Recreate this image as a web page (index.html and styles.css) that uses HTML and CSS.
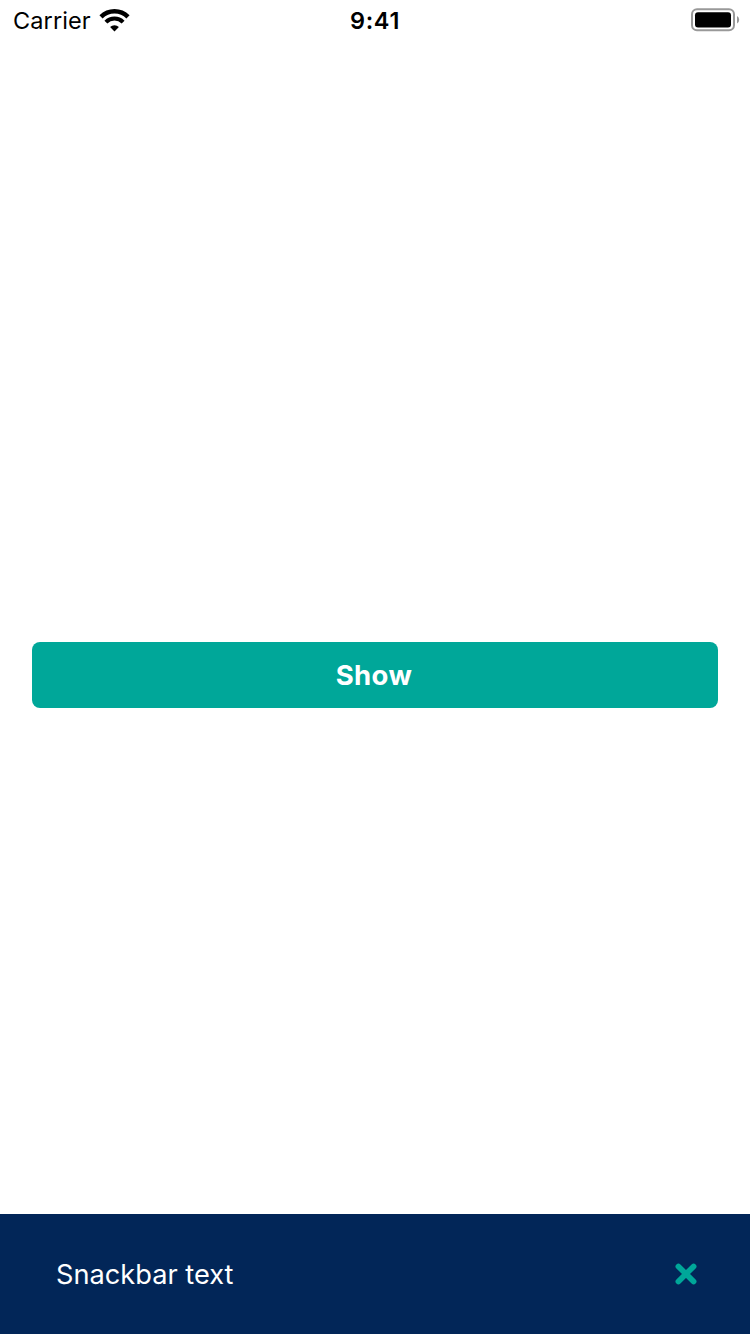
FILE: index.html
```html
<!DOCTYPE html>
<html lang="en">
<head>
<meta charset="utf-8">
<title>Snackbar</title>
<link rel="stylesheet" href="styles.css">
</head>
<body>
<div class="screen">
  <header class="status">
    <div class="status-left">
      <span class="carrier">Carrier</span>
      <svg class="wifi" width="32" height="24" viewBox="0 0 32 24">
        <path d="M2 8.8a19.2 19.2 0 0 1 27 0" fill="none" stroke="#000" stroke-width="4.5"/>
        <path d="M6.9 14.1a12.2 12.2 0 0 1 17.2 0" fill="none" stroke="#000" stroke-width="4.1"/>
        <path d="M11.1 19.1a6.4 6.4 0 0 1 8.8 0L15.5 23.5z"/>
      </svg>
    </div>
    <span class="time">9:41</span>
    <div class="status-right">
      <svg class="battery" width="50" height="24" viewBox="0 0 50 24">
        <rect x="2" y="1.2" width="42" height="21" rx="5" fill="none" stroke="#999" stroke-width="2"/>
        <rect x="5" y="4.2" width="36" height="15.2" rx="3"/>
        <path d="M47 8q2.2 1 2.2 3.8t-2.2 3.8z" fill="#999"/>
      </svg>
    </div>
  </header>
  <main class="content">
    <button class="show">Show</button>
  </main>
  <footer class="snackbar">
    <span class="message">Snackbar text</span>
    <svg class="close" width="24" height="24" viewBox="0 0 24 24">
      <path d="M4.4 4.4l15.2 15.2M19.6 4.4L4.4 19.6" stroke="#00a799" stroke-width="5.7" stroke-linecap="round"/>
    </svg>
  </footer>
</div>
</body>
</html>
```
FILE: styles.css
```css
body {
  margin: 0;
  background: #fff;
  font-family: Inter, "Liberation Sans", sans-serif;
}
.screen {
  display: flex;
  flex-direction: column;
  height: 1334px;
  overflow: hidden;
}
.status {
  display: grid;
  grid-template-columns: 1fr auto 1fr;
  height: 40px;
  align-items: center;
  padding: 0 10px;
  font-size: 23.5px;
  line-height: 38px;
}
.status-left {
  display: flex;
  align-items: center;
  gap: 8px;
  padding-left: 3px;
}
.carrier {
  padding-top: 2px;
  letter-spacing: 0.1px;
}
.status-right {
  display: flex;
  justify-content: flex-end;
}
.time {
  padding-top: 2px;
  font-weight: 600;
  letter-spacing: 0.7px;
}
.content {
  flex: 1;
  display: flex;
  flex-direction: column;
  padding: 602px 32px 0;
}
.show {
  height: 66px;
  border: 0;
  border-radius: 8px;
  padding: 1px 2px 0 0;
  background: #00a799;
  color: #fff;
  font: 700 27.5px/65px Inter, "Liberation Sans", sans-serif;
  letter-spacing: 0.4px;
}
.snackbar {
  display: flex;
  align-items: center;
  justify-content: space-between;
  height: 120px;
  box-sizing: border-box;
  padding: 0 52px 0 56px;
  background: #022658;
  color: #fff;
  font-size: 27.2px;
}
.message {
  padding-top: 1px;
}
```
